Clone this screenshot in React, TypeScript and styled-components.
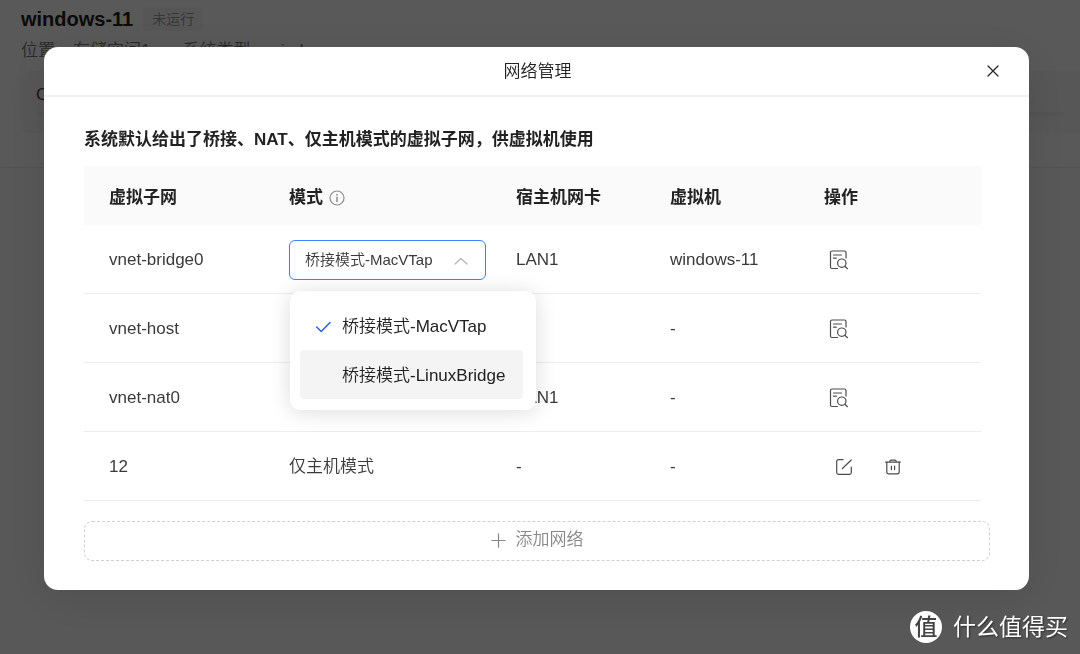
import React, { useState } from "react";
import styled, { createGlobalStyle, css } from "styled-components";

const GlobalStyle = createGlobalStyle`
  *, *::before, *::after { box-sizing: border-box; }
  body {
    margin: 0;
    background: #fcfcfc;
    color: #3a3a3a;
    font-family: "Liberation Sans", "Noto Sans CJK SC", sans-serif;
    font-size: 17px;
    line-height: 24px;
    font-weight: 350;
  }
  h1, h2, p, ul { margin: 0; padding: 0; }
  ul { list-style: none; }
  button, select { font: inherit; color: inherit; }
`;

const Page = styled.main`
  min-height: 100vh;
`;

const Summary = styled.header`
  padding: 7px 0 34px 21px;
  background: #fff;
  border-bottom: 1px solid #ececec;
`;

const TitleRow = styled.div`
  display: flex;
  align-items: center;
  gap: 10px;
`;

const MachineName = styled.h1`
  font-size: 20px;
  font-weight: 700;
  line-height: 24px;
  color: #222;
`;

const StatusTag = styled.span`
  padding: 0 9px;
  border-radius: 4px;
  background: #f5f5f5;
  color: #999;
  font-size: 14px;
`;

const Facts = styled.p`
  display: flex;
  gap: 32px;
  margin-top: 8px;
  color: #777;
`;

const Fact = styled.span`
  display: flex;
  gap: 18px;
`;

const UsageCard = styled.section`
  display: flex;
  flex-direction: column;
  gap: 5px;
  height: 62px;
  margin-top: 8px;
  padding: 12px 15px;
  border-radius: 8px 0 0 8px;
  background: #fafafa;
  color: #444;
`;

const UsageBar = styled.div`
  height: 4px;
  border-radius: 2px;
  background: #f0f0f0;
`;

const Overlay = styled.div`
  position: fixed;
  inset: 0;
  padding: 47px 51px 64px 44px;
  overflow: auto;
  background: rgba(0, 0, 0, 0.65);
`;

const Dialog = styled.section`
  border-radius: 14px;
  background: #fff;
  box-shadow: 0 8px 48px rgba(0, 0, 0, 0.12);
`;

const DialogHeader = styled.header`
  display: grid;
  grid-template-columns: 1fr auto 1fr;
  align-items: center;
  height: 50px;
  padding: 0 24px;
  border-bottom: 2px solid #f2f2f2;
`;

const DialogTitle = styled.h2`
  grid-column: 2;
  padding: 2px 0 0 2px;
  font-size: 17px;
  font-weight: 350;
  color: #222;
`;

const IconButton = styled.button`
  display: grid;
  place-items: center;
  width: 24px;
  height: 24px;
  padding: 0;
  border: 0;
  background: none;
  color: #4c4c4c;
  cursor: pointer;
`;

const CloseButton = styled(IconButton)`
  justify-self: end;
  color: #222;
`;

const DialogBody = styled.div`
  padding: 31px 39px 29px 40px;
`;

const Intro = styled.p`
  color: #222;
  font-weight: 700;
`;

const NetworkTable = styled.table`
  width: calc(100% - 9px);
  margin-top: 14px;
  border-collapse: separate;
  border-spacing: 0;
  table-layout: fixed;
`;

const HeadCell = styled.th<{ $width?: number }>`
  width: ${(p) => (p.$width ? `${p.$width}px` : "auto")};
  height: 59px;
  padding: 4px 0 0 25px;
  background: #fafafa;
  color: #222;
  font-weight: 700;
  text-align: left;
`;

const HeadLabel = styled.span`
  display: flex;
  align-items: center;
  gap: 6px;
`;

const Cell = styled.td`
  height: 69px;
  padding: 2px 0 0 25px;
  border-bottom: 1px solid #ededed;
`;

const Actions = styled.div<{ $wide?: boolean }>`
  display: flex;
  gap: 25px;
  padding-left: ${(p) => (p.$wide ? 8 : 3)}px;
`;

const ModePicker = styled.div`
  position: relative;
  width: 197px;
`;

const ModeSelect = styled.select`
  display: block;
  width: 100%;
  height: 40px;
  padding: 0 40px 0 15px;
  border: 1px solid #4080ff;
  border-radius: 6px;
  outline: 0;
  appearance: none;
  background: #fff;
  color: #3a3a3a;
  font-size: 15px;
`;

const Chevron = styled.svg`
  position: absolute;
  top: 14px;
  right: 18px;
  pointer-events: none;
`;

const Menu = styled.ul`
  position: absolute;
  top: 51px;
  left: 1px;
  z-index: 1;
  width: 246px;
  padding: 10px 13px 11px 10px;
  border-radius: 10px;
  background: #fff;
  box-shadow: 0 2px 22px rgba(0, 0, 0, 0.14);
`;

const MenuItem = styled.button<{ $active: boolean }>`
  display: grid;
  grid-template-columns: 16px auto;
  align-items: center;
  gap: 11px;
  width: 100%;
  height: 49px;
  padding: 2px 15px 0;
  border: 0;
  border-radius: 4px;
  background: none;
  color: #222;
  text-align: left;
  ${(p) =>
    p.$active &&
    css`
      background: #f4f4f4;
    `}
`;

const CheckSlot = styled.span`
  display: flex;
`;

const AddButton = styled.button`
  display: flex;
  align-items: center;
  justify-content: center;
  gap: 10px;
  width: 100%;
  height: 40px;
  margin-top: 20px;
  padding: 0 0 2px;
  border: 1px dashed #d0d0d0;
  border-radius: 8px;
  background: none;
  color: #888;
  cursor: pointer;
`;

const Watermark = styled.div`
  position: fixed;
  right: 12px;
  bottom: 10px;
  display: flex;
  align-items: center;
  gap: 11px;
  color: #fff;
  font-size: 23px;
  font-weight: 400;
  line-height: 34px;
  text-shadow: 1px 1px 2px rgba(0, 0, 0, 0.5);
`;

const Seal = styled.span`
  display: grid;
  place-items: center;
  width: 32px;
  height: 32px;
  border-radius: 50%;
  background: #fff;
  color: #444;
  font-size: 23px;
  font-weight: 500;
  text-shadow: none;
  line-height: 32px;
`;

const line = { fill: "none", stroke: "currentColor", strokeLinecap: "round", strokeLinejoin: "round" } as const;

const CloseIcon = () => (
  <svg width="12" height="12" viewBox="0 0 12 12" {...line} strokeWidth="1.2">
    <path d="M1 1l10 10M11 1L1 11" />
  </svg>
);

const InfoIcon = () => (
  <svg width="16" height="16" viewBox="0 0 16 16" {...line} stroke="#8c8c8c" strokeWidth="1.2">
    <circle cx="8" cy="8" r="7" />
    <path d="M8 7.2v4.3M8 4.500v.4" strokeWidth="1.500" />
  </svg>
);

const DetailIcon = () => (
  <svg width="20" height="20" viewBox="0 0 20 20" {...line} strokeWidth="1.2">
    <path d="M8.500 18.500H3A1.500 1.500 0 0 1 1.500 17V2.500A1.500 1.500 0 0 1 3 1h12.500A1.500 1.500 0 0 1 17 2.500V8" />
    <path d="M4.500 5h8M4.500 8.200h2.800" />
    <circle cx="12.800" cy="13.200" r="4.200" />
    <path d="M15.800 16.200l2.700 2.500" />
  </svg>
);

const EditIcon = () => (
  <svg width="18" height="18" viewBox="0 0 18 18" {...line} strokeWidth="1.2">
    <path d="M8 1.700H3.500a1.800 1.800 0 0 0-1.800 1.800v11a1.800 1.800 0 0 0 1.800 1.800h11a1.800 1.800 0 0 0 1.800-1.800V9" />
    <path d="M7.200 10.700L16.200 2" />
  </svg>
);

const TrashIcon = () => (
  <svg width="18" height="18" viewBox="0 0 18 18" {...line} strokeWidth="1.2">
    <path d="M1.700 4.200h14.600M5.800 4.200V3.400A1.200 1.200 0 0 1 7 2.200h4a1.200 1.200 0 0 1 1.200 1.200v.8" />
    <path d="M2.800 4.200v9.800a1.800 1.800 0 0 0 1.800 1.800h8.800a1.800 1.800 0 0 0 1.800-1.800V4.200M7.400 8.200v3.400M10.600 8.200v3.400" />
  </svg>
);

const CheckIcon = () => (
  <svg width="16" height="14" viewBox="0 0 16 14" {...line} stroke="#2b5cff" strokeWidth="1.5">
    <path d="M1.700 7l4.500 4.500L15 2.500" />
  </svg>
);

const PlusIcon = () => (
  <svg width="15" height="15" viewBox="0 0 15 15" {...line} strokeWidth="1.2">
    <path d="M7.500 .8v13.400M.8 7.500h13.400" />
  </svg>
);

const MODES = ["桥接模式-MacVTap", "桥接模式-LinuxBridge"];

const NETWORKS = [
  { name: "vnet-bridge0", bridged: true, mode: "", nic: "LAN1", vm: "windows-11", custom: false },
  { name: "vnet-host", bridged: false, mode: "", nic: "", vm: "-", custom: false },
  { name: "vnet-nat0", bridged: false, mode: "", nic: "LAN1", vm: "-", custom: false },
  { name: "12", bridged: false, mode: "仅主机模式", nic: "-", vm: "-", custom: true },
];

function ModeField() {
  const [mode, setMode] = useState(MODES[0]);
  return (
    <ModePicker>
      <ModeSelect aria-label="模式" value={mode} onChange={(e) => setMode(e.target.value)}>
        {MODES.map((m) => (
          <option key={m}>{m}</option>
        ))}
      </ModeSelect>
      <Chevron width="14" height="14" viewBox="0 0 14 14" {...line} stroke="#b4b4b4" strokeWidth="1.2">
        <path d="M1 10l6-5.500 6 5.500" />
      </Chevron>
      <Menu>
        {MODES.map((m, i) => (
          <li key={m}>
            <MenuItem type="button" $active={i === 1} onClick={() => setMode(m)}>
              <CheckSlot>{m === mode && <CheckIcon />}</CheckSlot>
              {m}
            </MenuItem>
          </li>
        ))}
      </Menu>
    </ModePicker>
  );
}

export default function App() {
  return (
    <>
      <GlobalStyle />
      <Page>
        <Summary>
          <TitleRow>
            <MachineName>windows-11</MachineName>
            <StatusTag>未运行</StatusTag>
          </TitleRow>
          <Facts>
            <Fact><span>位置</span><span>存储空间1</span></Fact>
            <Fact><span>系统类型</span><span>windows</span></Fact>
          </Facts>
          <UsageCard>
            <span>CPU</span>
            <UsageBar />
          </UsageCard>
        </Summary>
      </Page>
      <Overlay>
        <Dialog role="dialog" aria-labelledby="dialog-title">
          <DialogHeader>
            <DialogTitle id="dialog-title">网络管理</DialogTitle>
            <CloseButton type="button" aria-label="关闭"><CloseIcon /></CloseButton>
          </DialogHeader>
          <DialogBody>
            <Intro>系统默认给出了桥接、NAT、仅主机模式的虚拟子网，供虚拟机使用</Intro>
            <NetworkTable>
              <thead>
                <tr>
                  <HeadCell $width={180}>虚拟子网</HeadCell>
                  <HeadCell $width={227}><HeadLabel>模式<InfoIcon /></HeadLabel></HeadCell>
                  <HeadCell $width={154}>宿主机网卡</HeadCell>
                  <HeadCell $width={154}>虚拟机</HeadCell>
                  <HeadCell>操作</HeadCell>
                </tr>
              </thead>
              <tbody>
                {NETWORKS.map((n) => (
                  <tr key={n.name}>
                    <Cell>{n.name}</Cell>
                    <Cell>{n.bridged ? <ModeField /> : n.mode}</Cell>
                    <Cell>{n.nic}</Cell>
                    <Cell>{n.vm}</Cell>
                    <Cell>
                      {n.custom ? (
                        <Actions $wide>
                          <IconButton type="button" aria-label="编辑"><EditIcon /></IconButton>
                          <IconButton type="button" aria-label="删除"><TrashIcon /></IconButton>
                        </Actions>
                      ) : (
                        <Actions>
                          <IconButton type="button" aria-label="详情"><DetailIcon /></IconButton>
                        </Actions>
                      )}
                    </Cell>
                  </tr>
                ))}
              </tbody>
            </NetworkTable>
            <AddButton type="button"><PlusIcon />添加网络</AddButton>
          </DialogBody>
        </Dialog>
      </Overlay>
      <Watermark><Seal>值</Seal>什么值得买</Watermark>
    </>
  );
}
